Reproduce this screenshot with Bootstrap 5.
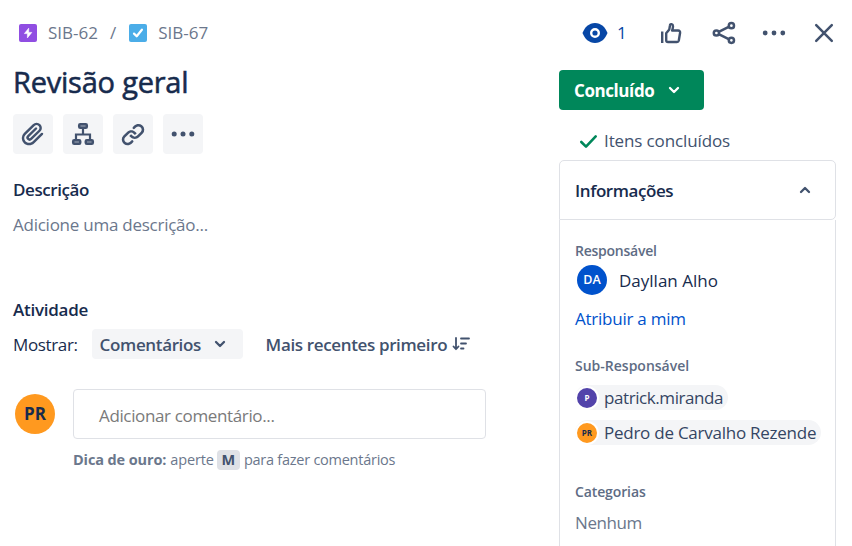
<!DOCTYPE html>
<html lang="pt-BR">
<head>
<meta charset="utf-8">
<meta name="viewport" content="width=device-width, initial-scale=1">
<title>SIB-67 Revisão geral</title>
<link href="https://cdn.jsdelivr.net/npm/bootstrap@5.3.0/dist/css/bootstrap.min.css" rel="stylesheet">
<style>
  body { font-family: "Open Sans", "Noto Sans", sans-serif; font-size: 17px; line-height: 24px; color: #172b4d; background: #fff; height: 546px; overflow: hidden; }
  svg { display: block; flex: none; }
  .t { white-space: nowrap; display: inline-block; }
  .ls-1 { letter-spacing: -.12px; }
  .ls-2 { letter-spacing: -.25px; }
  .ls-3 { letter-spacing: -.36px; }
  .ls-4 { letter-spacing: -.42px; }
  .nudge { padding-top: 2px; }
  .issue { height: 546px; }
  .main-col { width: 486px; padding-left: 13px; }
  .side-col { width: 277px; margin-left: 73px; }
  .top-row { height: 65px; }
  .muted { color: #6b778c; }
  .slate { color: #42526e; }
  .blue { color: #0747a6; }
  .epic-icon { margin-left: 6px; }
  .slash { margin: 0 13px 0 12px; }
  .crumb { margin-left: 11px; }
  .title { font-size: 29px; line-height: 34px; font-weight: 500; -webkit-text-stroke: .55px #172b4d; letter-spacing: -.22px; }
  .tools { gap: 10px; margin-top: 15px; }
  .sec { font-size: 17px; font-weight: 600; line-height: 24px; margin: 0; }
  .tool { width: 40px; height: 40px; border-radius: 4px; background: #f4f5f7; border: 0; padding: 0; color: #42526e; }
  .picker { height: 30px; width: 151px; border-radius: 4px; background: #f4f5f7; border: 0; padding: 0 17px 0 8px; color: #42526e; font-weight: 600; margin-left: 14px; }
  .sorter { font-weight: 600; margin-left: 23px; }
  .who { border-radius: 50%; font-weight: 700; display: flex; align-items: center; justify-content: center; flex: none; }
  .who-lg { width: 40px; height: 40px; font-size: 17px; background: #ff991f; color: #172b4d; }
  .who-md { width: 30px; height: 30px; font-size: 12.5px; background: #0052cc; color: #fff; font-weight: 600; margin-left: 2px; }
  .who-sm { width: 24px; height: 24px; font-size: 8px; border: 2px solid #fff; }
  .who-p { background: #5243aa; color: #fff; }
  .who-o { background: #ff991f; color: #172b4d; }
  .composer { margin: 30px 0 0 2px; gap: 18px; }
  .entry { width: 413px; height: 50px; border: 1px solid #dfe1e6; border-radius: 4px; padding: 3px 0 0 25px; color: #7a7a7a; }
  .tip { font-size: 14.5px; line-height: 20px; padding-left: 60px; margin-top: 11px; }
  .key { width: 23px; height: 20px; border-radius: 4px; background: #dfe1e6; color: #42526e; font-weight: 700; text-align: center; margin: 0 4px 0 3px; }
  .status { width: 145px; height: 40px; background: #00875a; color: #fff; border-radius: 4px; border: 0; font-weight: 700; padding: 0 24px 0 15px; margin-top: 5px; }
  .done { margin: 19px 0 0 20px; gap: 5px; }
  .panel-head { height: 60px; border: 1px solid #dfe1e6; border-radius: 5px 5px 5px 0; padding: 0 24px 0 15px; margin-top: 7px; }
  .panel-body { border: solid #dfe1e6; border-width: 0 1px; padding: 21px 0 0 15px; height: 326px; }
  .lbl { font-size: 14px; line-height: 20px; font-weight: 600; color: #5e6c84; }
  .link { color: #0052cc; text-decoration: none; }
  .person { height: 25px; border-radius: 13px; background: #f4f5f7; width: max-content; color: #344563; padding-right: 5px; gap: 5px; }
</style>
</head>
<body>
<div class="issue d-flex">
  <main class="main-col flex-shrink-0">
    <nav class="top-row d-flex align-items-center muted">
      <svg class="epic-icon" width="18" height="18" viewBox="0 0 18 18"><rect width="18" height="18" rx="2" fill="#904ee2"/><path d="M9.700 4.200 5.400 9.600h3v4.300l4.400-5.500h-3.100z" fill="#fff" stroke="#fff" stroke-width=".6" stroke-linejoin="round"/></svg>
      <span class="t crumb">SIB-62</span>
      <span class="t slash">/</span>
      <svg width="18" height="18" viewBox="0 0 18 18"><rect width="18" height="18" rx="2" fill="#4bade8"/><path d="m5 9.600 2.700 2.700 5.200-6.600" fill="none" stroke="#fff" stroke-width="2.200" stroke-linecap="round" stroke-linejoin="round"/></svg>
      <span class="t crumb">SIB-67</span>
    </nav>
    <h1 class="title m-0"><span class="t">Revisão geral</span></h1>
    <div class="tools d-flex">
      <button class="tool d-flex align-items-center justify-content-center" aria-label="Anexar"><svg width="30" height="30" viewBox="0 0 24 24" fill="currentColor"><path d="M11.643 17.965c-1.530 1.495-4.016 1.496-5.542.004a3.773 3.773 0 0 1 .002-5.412l7.147-6.985a2.316 2.316 0 0 1 3.233-.003c.893.873.895 2.282.004 3.153l-6.703 6.550a.653.653 0 0 1-.914-.008.62.62 0 0 1 0-.902l6.229-6.087a.941.941 0 0 0 0-1.353.995.995 0 0 0-1.384 0l-6.230 6.087a2.502 2.502 0 0 0 0 3.607 2.643 2.643 0 0 0 3.683.009l6.703-6.550a4.074 4.074 0 0 0-.003-5.859 4.306 4.306 0 0 0-6.002.003l-7.148 6.985a5.655 5.655 0 0 0-.001 8.118c2.290 2.237 6.015 2.238 8.308-.004l6.862-6.705a.941.941 0 0 0 0-1.353.995.995 0 0 0-1.384 0z"/></svg></button>
      <button class="tool d-flex align-items-center justify-content-center" aria-label="Item filho"><svg width="30" height="30" viewBox="0 0 30 30" fill="none" stroke="currentColor" stroke-width="2.500"><path d="M15 10v5M8 21v-5.500h14V21" stroke-width="2.200"/><g fill="#a5adba"><rect x="11.200" y="5.200" width="7.600" height="3.600" rx="1"/><rect x="5.200" y="21.200" width="7" height="3.600" rx="1"/><rect x="17.800" y="21.200" width="7" height="3.600" rx="1"/></g></svg></button>
      <button class="tool d-flex align-items-center justify-content-center" aria-label="Vincular"><svg width="30" height="30" viewBox="0 0 24 24" fill="currentColor"><path d="m12.856 5.457-.937.92a1.002 1.002 0 0 0 0 1.437 1.047 1.047 0 0 0 1.463 0l.984-.966c.967-.95 2.542-1.135 3.602-.288a2.540 2.540 0 0 1 .203 3.810l-2.903 2.852a2.646 2.646 0 0 1-3.696 0l-1.110-1.090L9 13.570l1.108 1.089c1.822 1.788 4.802 1.788 6.622 0l2.905-2.852a4.558 4.558 0 0 0-.357-6.820c-1.893-1.517-4.695-1.226-6.422.47"/><path d="m11.144 19.543.937-.92a1.002 1.002 0 0 0 0-1.437 1.047 1.047 0 0 0-1.462 0l-.985.966c-.967.95-2.542 1.135-3.602.288a2.540 2.540 0 0 1-.203-3.810l2.903-2.852a2.646 2.646 0 0 1 3.696 0l1.110 1.090L15 11.430l-1.108-1.089c-1.822-1.788-4.802-1.788-6.622 0l-2.905 2.852a4.558 4.558 0 0 0 .357 6.820c1.893 1.517 4.695 1.226 6.422-.47"/></svg></button>
      <button class="tool d-flex align-items-center justify-content-center" aria-label="Mais"><svg width="24" height="6" viewBox="0 0 24 6" fill="currentColor"><circle cx="3.200" cy="3" r="2.500"/><circle cx="12" cy="3" r="2.500"/><circle cx="20.800" cy="3" r="2.500"/></svg></button>
    </div>
    <h2 class="sec" style="margin-top:24px"><span class="t ls-4">Descrição</span></h2>
    <div class="muted" style="margin-top:11px"><span class="t ls-2">Adicione uma descrição...</span></div>
    <h2 class="sec" style="margin-top:61px"><span class="t ls-2">Atividade</span></h2>
    <div class="d-flex align-items-center" style="margin-top:7px">
      <span class="t nudge ls-3">Mostrar:</span>
      <button class="picker d-flex align-items-center justify-content-between"><span class="t nudge ls-3">Comentários</span><svg width="12" height="8" viewBox="0 0 12 8" fill="none" stroke="currentColor" stroke-width="2.300" stroke-linecap="round" stroke-linejoin="round"><path d="M2 2l4 4 4-4"/></svg></button>
      <div class="sorter slate d-flex align-items-center"><span class="t nudge ls-3">Mais recentes primeiro</span><svg width="18" height="16" viewBox="0 0 18 16" style="margin-left:5px" fill="none" stroke="currentColor" stroke-width="1.800" stroke-linecap="round" stroke-linejoin="round"><path d="M4 2v11M1.500 10.500 4 13.200l2.500-2.700M9 2.500h8M9 7.500h5M9 12.500h2.500"/></svg></div>
    </div>
    <div class="composer d-flex align-items-center">
      <div class="who who-lg"><span class="t">PR</span></div>
      <div class="entry d-flex align-items-center"><span class="t ls-3">Adicionar comentário...</span></div>
    </div>
    <div class="tip muted d-flex align-items-center"><b class="t ls-1">Dica de ouro:</b><span class="t ls-1" style="margin-left:4px">aperte</span><span class="key">M</span><span class="t ls-2">para fazer comentários</span></div>
  </main>
  <aside class="side-col flex-shrink-0">
    <div class="top-row d-flex align-items-center slate">
      <svg class="blue" width="26" height="20" viewBox="0 0 26 20" style="margin-left:23px"><path d="M13 0C7 0 2.700 4.300.5 10 2.700 15.700 7 20 13 20s10.300-4.300 12.500-10C23.300 4.300 19 0 13 0z" fill="currentColor"/><circle cx="13" cy="10" r="3.800" fill="none" stroke="#fff" stroke-width="2.400"/></svg>
      <span class="t blue" style="margin-left:9px;font-weight:500">1</span>
      <svg width="22" height="22" viewBox="0 0 22 22" style="margin-left:33px" fill="none" stroke="currentColor" stroke-width="2.400" stroke-linejoin="round"><path d="M2.200 9.500V21"/><path d="M6.200 11.200 9.300 7.400 10 3.200C10.200 1.600 13 1.700 13 4.300c0 1.800-.5 3-.9 4.200h6c1.500 0 2.200 1 2 2.300l-1.300 7.700c-.2 1-.8 1.500-1.800 1.500H8c-1.200 0-1.800-.7-1.800-1.800z"/></svg>
      <svg width="24" height="24" viewBox="0 0 24 24" style="margin-left:30px" fill="none" stroke="currentColor" stroke-width="2.500"><circle cx="4.400" cy="12" r="2.600"/><circle cx="19.400" cy="4.700" r="2.600"/><circle cx="19.400" cy="19.300" r="2.600"/><path d="m6.700 10.800 10-5M6.700 13.200l10 5"/></svg>
      <svg width="24" height="6" viewBox="0 0 24 6" style="margin-left:26px" fill="currentColor"><circle cx="3.200" cy="3" r="2.400"/><circle cx="12" cy="3" r="2.400"/><circle cx="20.800" cy="3" r="2.400"/></svg>
      <svg width="20" height="20" viewBox="0 0 20 20" style="margin-left:28px" fill="none" stroke="currentColor" stroke-width="2.500" stroke-linecap="round"><path d="m2.200 2.200 15.600 15.600M17.800 2.200 2.200 17.800"/></svg>
    </div>
    <button class="status d-flex align-items-center justify-content-between"><span class="t nudge ls-4">Concluído</span><svg width="12" height="8" viewBox="0 0 12 8" fill="none" stroke="currentColor" stroke-width="2.300" stroke-linecap="round" stroke-linejoin="round"><path d="M2 2l4 4 4-4"/></svg></button>
    <div class="done slate d-flex align-items-center"><svg width="20" height="16" viewBox="0 0 20 16" fill="none" stroke="#00875a" stroke-width="2.600" stroke-linecap="round" stroke-linejoin="round"><path d="m2.300 9 4.700 4.600L16.700 3.400"/></svg><span class="t ls-1">Itens concluídos</span></div>
    <div class="panel-head d-flex align-items-center justify-content-between"><span class="t sec nudge ls-4">Informações</span><svg class="slate" width="12" height="8" viewBox="0 0 12 8" fill="none" stroke="currentColor" stroke-width="2.300" stroke-linecap="round" stroke-linejoin="round"><path d="M2 6l4-4 4 4"/></svg></div>
    <div class="panel-body">
      <div class="lbl"><span class="t ls-2">Responsável</span></div>
      <div class="d-flex align-items-center" style="margin-top:4px"><div class="who who-md">DA</div><span class="t nudge" style="margin-left:12px">Dayllan Alho</span></div>
      <div style="margin-top:12px"><a class="link t ls-2" href="#">Atribuir a mim</a></div>
      <div class="lbl" style="margin-top:25px"><span class="t">Sub-Responsável</span></div>
      <div class="person d-flex align-items-center" style="margin-top:9px"><div class="who who-sm who-p">P</div><span class="t ls-4">patrick.miranda</span></div>
      <div class="person d-flex align-items-center" style="margin-top:10px"><div class="who who-sm who-o">PR</div><span class="t ls-2">Pedro de Carvalho Rezende</span></div>
      <div class="lbl" style="margin-top:37px"><span class="t ls-1">Categorias</span></div>
      <div class="muted" style="margin-top:9px"><span class="t ls-4">Nenhum</span></div>
    </div>
  </aside>
</div>
<script src="https://cdn.jsdelivr.net/npm/bootstrap@5.3.0/dist/js/bootstrap.bundle.min.js"></script>
</body>
</html>
